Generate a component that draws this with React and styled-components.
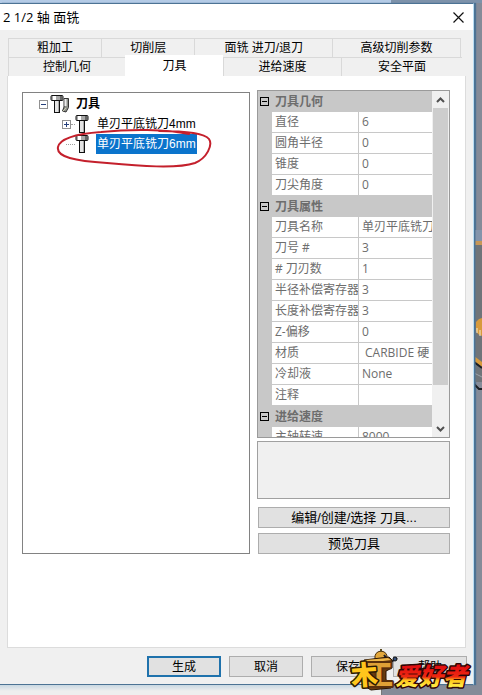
import React from 'react'
import styled, { createGlobalStyle } from 'styled-components'

const backTabs = [
    { label: '粗加工', width: 93 },
    { label: '切削层', width: 93 },
    { label: '面铣 进刀/退刀', width: 138 },
    { label: '高级切削参数', width: 128 },
]

const frontTabs = [
    { label: '控制几何', width: 117 },
    { label: '刀具', width: 98 },
    { label: '进给速度', width: 118 },
    { label: '安全平面', width: 121 },
]

const groups = [
    {
        name: '刀具几何',
        rows: [['直径', '6'], ['圆角半径', '0'], ['锥度', '0'], ['刀尖角度', '0']],
    },
    {
        name: '刀具属性',
        rows: [
            ['刀具名称', '单刃平底铣刀'],
            ['刀号 #', '3'],
            ['# 刀刃数', '1'],
            ['半径补偿寄存器', '3'],
            ['长度补偿寄存器', '3'],
            ['Z-偏移', '0'],
            ['材质', '\u00a0CARBIDE 硬'],
            ['冷却液', 'None'],
            ['注释', ''],
        ],
    },
    {
        name: '进给速度',
        rows: [['主轴转速', '8000']],
    },
]

const footerButtons = ['生成', '取消', '保存', '帮助']

// Small end mill drawing used by the tree
function MillShape() {
    return (
        <>
            <rect x="4.5" y="6.5" width="5" height="12" fill="#e4e4e4" stroke="#111" />
            <path d="M8.5 7v11" stroke="#aaa" />
            <rect x="1" y="1.5" width="12" height="5" rx="1" fill="#a8a8a8" stroke="#111" />
            <path d="M4.5 2v4" stroke="#fff" strokeWidth="3" />
            <path d="M11 2v4" stroke="#666" strokeWidth="2" />
        </>
    )
}

function MillIcon() {
    return (
        <svg width="14" height="20" viewBox="0 0 14 20" aria-hidden="true">
            <MillShape />
        </svg>
    )
}

function ToolSetIcon() {
    return (
        <svg width="22" height="20" viewBox="0 0 22 20" aria-hidden="true">
            <MillShape />
            <path d="M14 4.500h4.500v9l-2.500 4.500-3.500-1 1.500-4z" fill="#8f918b" stroke="#333" />
            <path d="M15.500 5v7" stroke="#eee" strokeWidth="2" />
            <path d="M13 17l3-3" stroke="#c9cbb0" />
        </svg>
    )
}

function Expander({ open }) {
    return (
        <svg width="9" height="9" viewBox="0 0 9 9" aria-hidden="true">
            <rect x="0.5" y="0.5" width="8" height="8" fill="#fff" stroke="#919191" />
            <path d={open ? 'M2 4.5h5' : 'M2 4.5h5M4.500 2v5'} stroke="#26407c" />
        </svg>
    )
}

function Chevron({ down }) {
    return (
        <svg width="9" height="6" viewBox="0 0 9 6" aria-hidden="true">
            <path d={down ? 'M1 1l3.500 3.500 3.500-3.500' : 'M1 5l3.500-3.500 3.500 3.500'} fill="none" stroke="#505050" strokeWidth="2" />
        </svg>
    )
}

function ToolTree() {
    return (
        <Tree aria-label="刀具">
            <TreeRow $level={0}>
                <Expander open />
                <ToolSetIcon />
                <TreeLabel $bold>刀具</TreeLabel>
            </TreeRow>
            <TreeRow $level={1}>
                <Expander />
                <Branch />
                <MillIcon />
                <TreeLabel>单刃平底铣刀4mm</TreeLabel>
            </TreeRow>
            <TreeRow $level={1}>
                <Branch $long />
                <MillIcon />
                <TreeLabel $selected>单刃平底铣刀6mm</TreeLabel>
            </TreeRow>
            <PenMark width="160" height="42" viewBox="0 0 160 42" aria-hidden="true">
                <path
                    d="M134 8C111 3 75 3 46 6C18 8 5 13 3 21C1 31 20 35 52 37C84 40 122 43 140 37C152 32 158 19 154 13C150 8 132 5 104 5"
                    fill="none" stroke="#c4202c" strokeWidth="2" strokeLinecap="round"
                />
            </PenMark>
        </Tree>
    )
}

function PropertyGrid() {
    return (
        <GridFrame>
            <GridView>
                <Table>
                    <colgroup>
                        <col width="14" />
                        <col width="87" />
                        <col />
                    </colgroup>
                    {groups.map((group) => (
                        <tbody key={group.name}>
                            <tr>
                                <Gutter><GroupBox /></Gutter>
                                <GroupName colSpan={2} scope="rowgroup">{group.name}</GroupName>
                            </tr>
                            {group.rows.map(([name, value]) => (
                                <tr key={name}>
                                    <Gutter />
                                    <Cell $divider>{name}</Cell>
                                    <Cell>{value}</Cell>
                                </tr>
                            ))}
                        </tbody>
                    ))}
                </Table>
            </GridView>
            <ScrollBar>
                <ScrollButton type="button" aria-label="向上"><Chevron /></ScrollButton>
                <Thumb />
                <ScrollButton type="button" aria-label="向下"><Chevron down /></ScrollButton>
            </ScrollBar>
        </GridFrame>
    )
}

function GroupBox() {
    return (
        <svg width="10" height="10" viewBox="0 0 10 10" aria-hidden="true">
            <rect x="0.5" y="0.5" width="8" height="8" fill="none" stroke="#000" />
            <path d="M2 4.500h5" stroke="#000" />
        </svg>
    )
}

// Part of the machined model that shows beside the dialog
function ModelEdge() {
    return (
        <Model width="8" height="170" viewBox="0 0 8 170" aria-hidden="true">
            <rect width="8" height="11" fill="#8494ab" />
            <rect y="11" width="8" height="4" fill="#c79757" />
            <rect y="15" width="8" height="137" fill="#6f7479" />
            <path d="M2 92l3-3 3-1v18l-4-2-2-3z" fill="#d79a3c" />
            <path d="M3 98v5M6 100v6" stroke="#f5ead0" />
            <path d="M0 126l8 6v5l-8-6z" fill="#d79a3c" />
            <path d="M0 132l8 6M0 154l5 5h3" fill="none" stroke="#1b1f24" strokeWidth="2" />
            <path d="M0 143l8 4" stroke="#9aa0a8" />
            <path d="M0 0v170" stroke="#4c7394" strokeWidth="3" />
        </Model>
    )
}

// Site badge in the corner
function SiteBadge() {
    return (
        <Badge width="126" height="44" viewBox="0 0 126 44" role="img" aria-label="木工爱好者">
            <defs>
                <linearGradient id="fire" gradientUnits="userSpaceOnUse" x1="0" y1="18" x2="0" y2="38">
                    <stop offset="0" stopColor="#e30f10" />
                    <stop offset="0.5" stopColor="#ee2a12" />
                    <stop offset="0.68" stopColor="#ffc81c" />
                    <stop offset="1" stopColor="#fff04a" />
                </linearGradient>
            </defs>
            <path d="M25 10q-1-7 6-8q7 1 6 8z" fill="#e3a83c" stroke="#4b2c05" />
            <path d="M31 3V0" stroke="#5b4a20" strokeWidth="2" />
            <path d="M38 15l9-6M38 11l-4-5" stroke="#151b2c" strokeWidth="2" />
            <circle cx="45" cy="10" r="2" fill="#35507c" stroke="#111" />
            <path d="M14 11l25-3 3 3v8l-6 3v9l5 2v6l-20 2-5-3z" fill="#6b3b10" stroke="#2a1503" />
            <path d="M15 11l23-2 3 2-24 3z" fill="#f0b94a" />
            <BadgeText x="15" y="36" $size={28} fill="#e0a136" stroke="#5a300c" strokeWidth="4">工</BadgeText>
            <BadgeText x="1" y="36" $size={27} fill="#ffc61c" stroke="#2a1a02" strokeWidth="3" transform="rotate(-4 13 28)">木</BadgeText>
            <BadgeText x="45" y="36" $size={24} $italic fill="url(#fire)" stroke="#2c0505" strokeWidth="3">爱好者</BadgeText>
        </Badge>
    )
}

function App() {
    return (
        <Desktop>
            <GlobalStyle />
            <ModelEdge />
            <Dialog>
                <TitleBar>
                    <Title>2 1/2 轴 面铣</Title>
                    <CloseButton type="button" aria-label="关闭">
                        <svg width="11" height="11" viewBox="0 0 11 11">
                            <path d="M0.500 0.500l10 10M10.500 0.500l-10 10" stroke="#111" strokeWidth="1.200" />
                        </svg>
                    </CloseButton>
                </TitleBar>
                <Body>
                    <div role="tablist">
                        <TabRow>
                            {backTabs.map((tab) => (
                                <Tab key={tab.label} type="button" role="tab" $grow={tab.width}>{tab.label}</Tab>
                            ))}
                            <TabRowEnd />
                        </TabRow>
                        <TabRow>
                            {frontTabs.map((tab) => (
                                <Tab
                                    key={tab.label} type="button" role="tab" $grow={tab.width}
                                    $active={tab.label === '刀具'} aria-selected={tab.label === '刀具'}
                                >
                                    {tab.label}
                                </Tab>
                            ))}
                        </TabRow>
                    </div>
                    <Page>
                        <ToolTree />
                        <Side>
                            <PropertyGrid />
                            <Hint />
                            <PushButton type="button" $wide>编辑/创建/选择 刀具...</PushButton>
                            <PushButton type="button" $wide>预览刀具</PushButton>
                        </Side>
                    </Page>
                </Body>
                <Footer>
                    {footerButtons.map((label, index) => (
                        <PushButton key={label} type="button" $primary={index === 0}>{label}</PushButton>
                    ))}
                </Footer>
            </Dialog>
            <BackWindow />
            <SiteBadge />
        </Desktop>
    )
}

const GlobalStyle = createGlobalStyle`
    * {
        box-sizing: border-box;
    }

    body {
        margin: 0;
        font: 12px/18px "Liberation Sans", "Noto Sans CJK SC", sans-serif;
        color: #000;
    }

    button {
        font: inherit;
        color: inherit;
        padding: 0;
        margin: 0;
    }
`

const Desktop = styled.div`
    position: relative;
    display: flex;
    flex-direction: column;
    height: 100vh;
    padding: 3px 8px 0 0;
    background: linear-gradient(90deg, #b4cbe6 391px, #7d92aa 391px) top / 100% 3px no-repeat, #858b98;
`

const Model = styled.svg`
    position: absolute;
    top: 230px;
    right: 0;
`

const Dialog = styled.div`
    display: flex;
    flex-direction: column;
    flex: 1;
    min-height: 0;
    background: #f0f0f0;
    border: 1px solid #4c7394;
    border-left: 0;
    border-right-color: #b8dcf2;
    box-shadow: 2px 0 1px #4c7394;
`

const BackWindow = styled.div`
    height: 10px;
    margin-right: 92px;
    background: linear-gradient(#c9d8e2, #eeeeee 6px);
    border-right: 1px solid #777;
`

const TitleBar = styled.header`
    display: flex;
    align-items: center;
    justify-content: space-between;
    height: 26px;
    padding: 0 9px 0 3px;
    background: #fff;
`

const Title = styled.h1`
    margin: 0;
    font: 13px/18px "Open Sans", "Noto Sans CJK SC", sans-serif;
`

const CloseButton = styled.button`
    display: flex;
    border: 0;
    background: none;
`

const Body = styled.main`
    display: flex;
    flex-direction: column;
    flex: 1;
    min-height: 0;
    padding: 8px 7px 0;
`

const TabRow = styled.div`
    display: flex;
    height: 19px;
    padding: 0 4px 0 1px;
`

const TabRowEnd = styled.span`
    width: 2px;
    border-left: 1px solid #d9d9d9;
`

const Tab = styled.button`
    flex: ${({ $grow }) => $grow} 1 0;
    display: flex;
    align-items: center;
    justify-content: center;
    border: 1px solid #d9d9d9;
    border-width: 1px 0 0 1px;
    white-space: nowrap;
    background: ${({ $active }) => ($active ? '#fff' : '#f0f0f0')};
    ${({ $active }) => $active && `
        margin-top: -2px;
        border-color: #fff;
    `}
`

const Page = styled.section`
    display: flex;
    gap: 7px;
    flex: 1;
    min-height: 0;
    padding: 14px 15px 93px 14px;
    background: #fff;
    border: 1px solid #dcdcdc;
    border-top: 0;
`

const Tree = styled.div`
    position: relative;
    flex: 227 1 0;
    margin-top: 2px;
    padding-top: 1px;
    border: 1px solid #828282;
    background: #fff;
`

const TreeRow = styled.div`
    display: flex;
    align-items: center;
    height: 20px;
    padding-left: ${({ $level }) => 16 + $level * 23}px;

    > svg + svg {
        margin-left: 2px;
    }
`

const Branch = styled.span`
    width: ${({ $long }) => ($long ? 9 : 4)}px;
    margin-left: ${({ $long }) => ($long ? 4 : 0)}px;
    border-top: 1px dotted #a0a0a0;
`

const TreeLabel = styled.span`
    margin-left: ${({ $bold }) => ($bold ? 3 : 7)}px;
    padding: 0 1px;
    line-height: 20px;
    font-weight: ${({ $bold }) => ($bold ? 700 : 400)};
    color: ${({ $selected }) => ($selected ? '#fff' : '#000')};
    background: ${({ $selected }) => ($selected ? '#0b74cc' : 'none')};
`

const PenMark = styled.svg`
    position: absolute;
    top: 33px;
    left: 32px;
`

const Side = styled.div`
    display: flex;
    flex-direction: column;
    flex: 194 1 0;
    min-width: 0;
`

const GridFrame = styled.div`
    display: flex;
    flex: 1;
    min-height: 0;
    border: 1px solid #9a9a9a;
`

const GridView = styled.div`
    flex: 1;
    min-width: 0;
    overflow: hidden;
    font-family: "Open Sans", "Noto Sans CJK SC", sans-serif;
    color: #6d6d6d;
`

const Table = styled.table`
    width: 100%;
    table-layout: fixed;
    border-spacing: 0;
`

const Gutter = styled.td`
    height: 21px;
    padding: 0 0 0 2px;
    background: #c8c8c8;

    svg {
        display: block;
    }
`

const GroupName = styled.th`
    padding: 0 3px;
    line-height: 20px;
    text-align: left;
    background: #c8c8c8;
`

const Cell = styled.td`
    height: 21px;
    padding: 0 0 0 3px;
    overflow: hidden;
    line-height: 20px;
    white-space: nowrap;
    border-bottom: 1px solid #c8c8c8;
    border-right: ${({ $divider }) => ($divider ? '1px solid #c8c8c8' : '0')};
`

const ScrollBar = styled.div`
    display: flex;
    flex-direction: column;
    width: 17px;
    background: #f0f0f0;
`

const ScrollButton = styled.button`
    display: flex;
    align-items: center;
    justify-content: center;
    height: 17px;
    border: 0;
    background: #f0f0f0;

    &:last-child {
        margin-top: auto;
    }
`

const Thumb = styled.div`
    height: 80%;
    margin: 0 1px;
    background: #cdcdcd;
`

const Hint = styled.div`
    height: 58px;
    margin: 3px 0;
    border: 1px solid #a0a0a0;
    background: #f0f0f0;
`

const PushButton = styled.button`
    height: 21px;
    border: ${({ $primary }) => ($primary ? '2px solid #1f72ac' : '1px solid #adadad')};
    background: #e1e1e1;
    line-height: 16px;
    white-space: nowrap;
    ${({ $wide }) => ($wide ? `
        margin: 5px 0 0 1px;
        font-size: 13px;
    ` : `
        width: 74px;
    `)}
`

const Footer = styled.footer`
    display: flex;
    justify-content: flex-end;
    gap: 8px;
    padding: 8px 6px 7px;
`

const Badge = styled.svg`
    position: absolute;
    right: 6px;
    bottom: 2px;
`

const BadgeText = styled.text`
    font: ${({ $italic }) => ($italic ? 'italic' : 'normal')} 900 ${({ $size }) => $size}px "Noto Sans CJK SC", sans-serif;
    paint-order: stroke;
    stroke-linejoin: round;
`

export default App
